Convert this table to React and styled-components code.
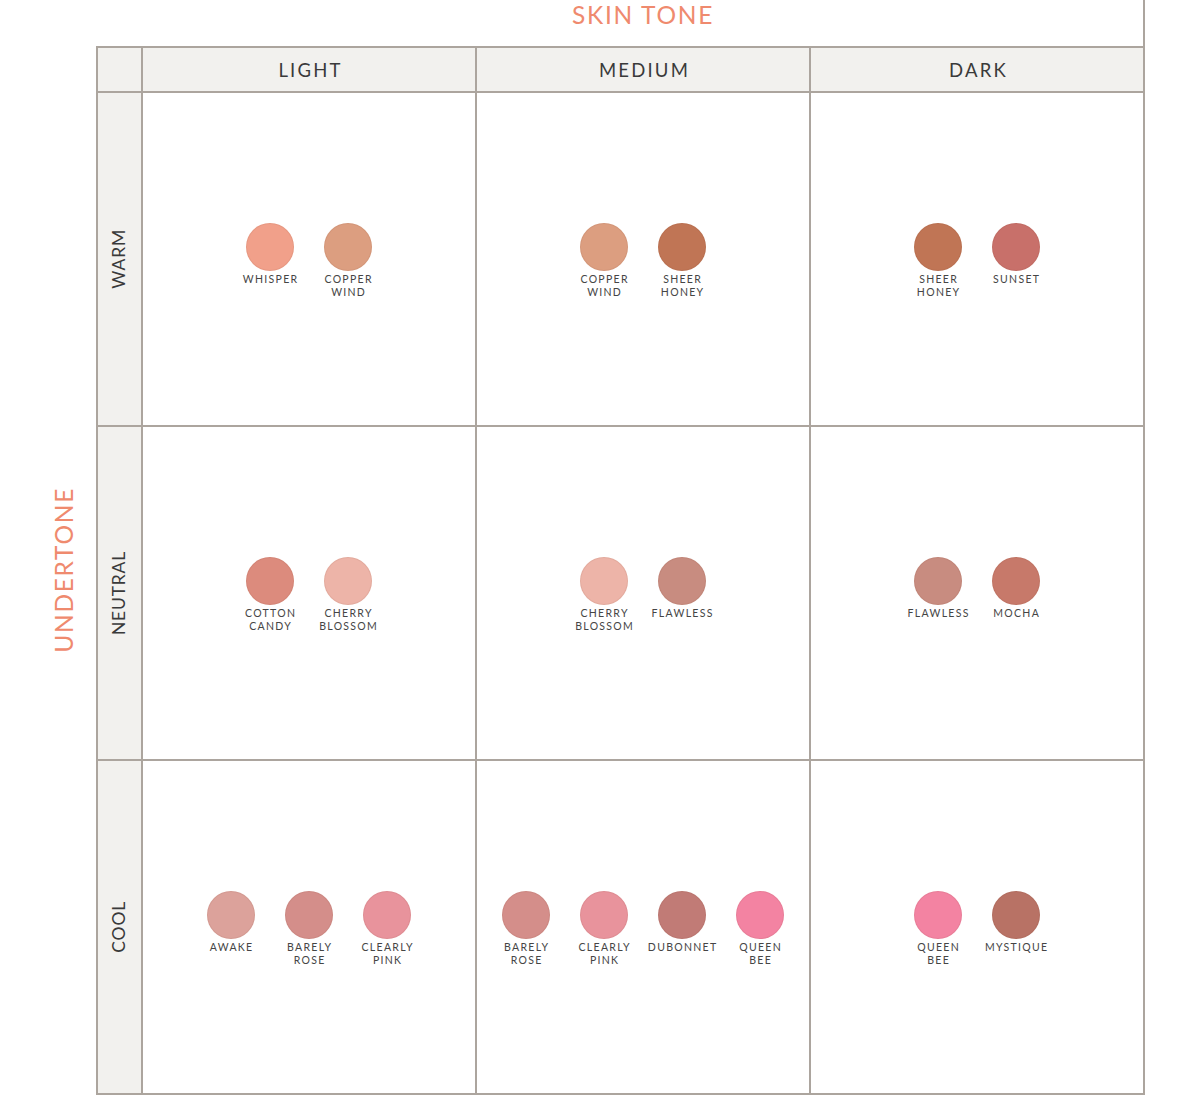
import React from "react";
import styled, { createGlobalStyle } from "styled-components";

const Global = createGlobalStyle`
  html, body { margin: 0; padding: 0; background: #ffffff; }
  body { font-family: Lato, "Open Sans", sans-serif; }
`;

const LINE = "#aca59e";

const Page = styled.div`
  display: grid;
  grid-template-columns: 96px 1049px;
  grid-template-rows: 46px 1049px;
  width: 1200px;
  height: 1096px;
`;

const TitleBar = styled.div`
  grid-column: 2;
  grid-row: 1;
  display: flex;
  justify-content: center;
  align-items: flex-start;
  padding-left: 45px;
  box-sizing: border-box;
  border-right: 2px solid ${LINE};
`;

const AxisTitle = styled.div`
  color: #ef8a6e;
  font-family: Lato, sans-serif;
  font-size: 24.5px;
  letter-spacing: 1.7px;
  line-height: 30px;
  padding-left: 2px;
  white-space: nowrap;
`;

const SideBar = styled.div`
  grid-column: 1;
  grid-row: 2;
  display: flex;
  justify-content: flex-end;
  align-items: center;
  padding-right: 20px;
`;

const VerticalTitle = styled(AxisTitle)`
  writing-mode: vertical-rl;
  transform: rotate(180deg);
  line-height: 24px;
  padding-left: 0;
  padding-top: 2px;
`;

const Table = styled.div`
  grid-column: 2;
  grid-row: 2;
  display: grid;
  grid-template-columns: 43px repeat(3, 332px);
  grid-template-rows: 43px repeat(3, 332px);
  gap: 2px;
  padding: 2px;
  background: ${LINE};
`;

const HeadCell = styled.div`
  background: #f2f1ee;
  display: flex;
  align-items: center;
  justify-content: center;
`;

const ColLabel = styled.div`
  color: #3a3a3a;
  font-size: 18.5px;
  letter-spacing: 2.2px;
  line-height: 1;
  padding-top: 2px;
  padding-left: 3px;
`;

const RowLabel = styled.div`
  color: #3a3a3a;
  font-size: 17.5px;
  letter-spacing: 0.8px;
  line-height: 1;
  writing-mode: vertical-rl;
  transform: rotate(180deg);
  padding-left: 1px;
`;

const Cell = styled.div`
  background: #ffffff;
  display: flex;
  align-items: center;
  justify-content: center;
`;

const Swatches = styled.div`
  display: flex;
  align-items: flex-start;
  justify-content: center;
  margin-top: 4px;
`;

const Swatch = styled.div`
  width: 78px;
  display: flex;
  flex-direction: column;
  align-items: center;
`;

const Dot = styled.div`
  width: 48px;
  height: 48px;
  border-radius: 50%;
  background: ${(p) => p.$color};
  box-shadow: inset 0 0 0 1px rgba(120, 60, 40, 0.08);
`;

const Name = styled.div`
  margin-top: 2px;
  min-height: 26px;
  color: #454545;
  font-size: 10.5px;
  letter-spacing: 1.3px;
  line-height: 13px;
  text-align: center;
  padding-left: 1.3px;
  white-space: nowrap;
`;

const C = {
  whisper: "#f1a08a",
  copper: "#dc9e80",
  honey: "#c07555",
  sunset: "#c8706a",
  cotton: "#dc8b7d",
  cherry: "#edb4a8",
  flawless: "#c88c80",
  mocha: "#c7796a",
  awake: "#dca29b",
  barely: "#d48e8a",
  clearly: "#e8939c",
  dubonnet: "#c17b76",
  queen: "#f383a2",
  mystique: "#b87265",
};

const rows = [
  {
    label: "WARM",
    cells: [
      [["WHISPER", C.whisper], ["COPPER\nWIND", C.copper]],
      [["COPPER\nWIND", C.copper], ["SHEER\nHONEY", C.honey]],
      [["SHEER\nHONEY", C.honey], ["SUNSET", C.sunset]],
    ],
  },
  {
    label: "NEUTRAL",
    cells: [
      [["COTTON\nCANDY", C.cotton], ["CHERRY\nBLOSSOM", C.cherry]],
      [["CHERRY\nBLOSSOM", C.cherry], ["FLAWLESS", C.flawless]],
      [["FLAWLESS", C.flawless], ["MOCHA", C.mocha]],
    ],
  },
  {
    label: "COOL",
    cells: [
      [["AWAKE", C.awake], ["BARELY\nROSE", C.barely], ["CLEARLY\nPINK", C.clearly]],
      [["BARELY\nROSE", C.barely], ["CLEARLY\nPINK", C.clearly], ["DUBONNET", C.dubonnet], ["QUEEN\nBEE", C.queen]],
      [["QUEEN\nBEE", C.queen], ["MYSTIQUE", C.mystique]],
    ],
  },
];

export default function App() {
  return (
    <>
      <Global />
      <Page>
        <TitleBar>
          <AxisTitle>SKIN TONE</AxisTitle>
        </TitleBar>
        <SideBar>
          <VerticalTitle>UNDERTONE</VerticalTitle>
        </SideBar>
        <Table>
          <HeadCell />
          {["LIGHT", "MEDIUM", "DARK"].map((t) => (
            <HeadCell key={t}>
              <ColLabel>{t}</ColLabel>
            </HeadCell>
          ))}
          {rows.map((r) => (
            <React.Fragment key={r.label}>
              <HeadCell>
                <RowLabel>{r.label}</RowLabel>
              </HeadCell>
              {r.cells.map((cell, i) => (
                <Cell key={i}>
                  <Swatches>
                    {cell.map(([name, color], j) => (
                      <Swatch key={j}>
                        <Dot $color={color} />
                        <Name>
                          {name.split("\n").map((l, k) => (
                            <div key={k}>{l}</div>
                          ))}
                        </Name>
                      </Swatch>
                    ))}
                  </Swatches>
                </Cell>
              ))}
            </React.Fragment>
          ))}
        </Table>
      </Page>
    </>
  );
}
